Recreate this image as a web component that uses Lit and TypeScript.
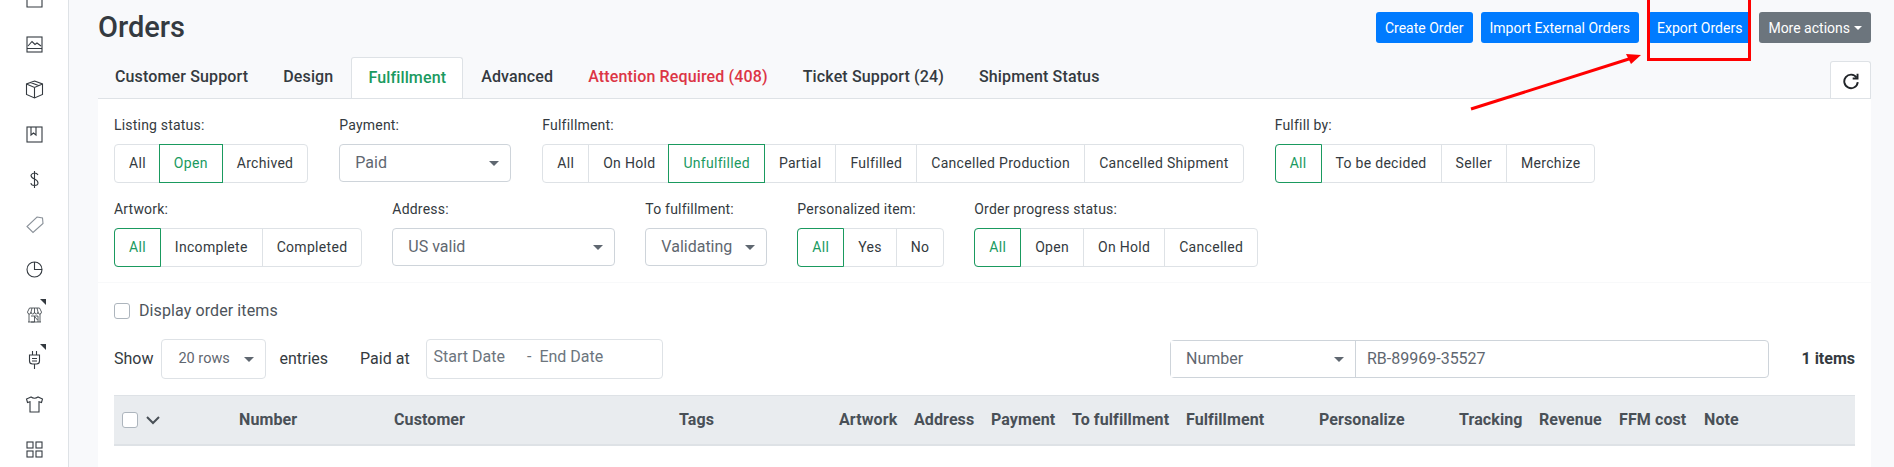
import { LitElement, html, css, svg } from "lit";
import { customElement } from "lit/decorators.js";

type Group = { label: string; items: string[]; active: string };

const icons = [
  svg`<path d="M2 0v17h15V0M5 0v4.5q0 2 2 2h5q2 0 2-2V0"/>`,
  svg`<rect x="2" y="2" width="15" height="15"/><path d="M2 13.5h15M3 11l4-4.5 3 3 2-1.5 4 3"/>`,
  svg`<path d="M9.5 1l8 3v10.5l-8 3.5-8-3.5V4zM1.5 4l8 3.5 8-3.5M9.5 7.5V18M5.5 2.5l8 3"/>`,
  svg`<rect x="2" y="2" width="15" height="15"/><path d="M6 2v8l2.5-2 2.5 2V2"/>`,
  svg`<path d="M13 5q-1-2-3.5-2T6 5.2q0 2.3 3.5 3.8T13 13q0 2.5-3.5 2.5T6 13M9.5 1v17"/>`,
  svg`<path class="soft" d="M12 2l5.5 1 .5 5.5L8 17.5 2 11.5zM14.5 5.5h.01"/>`,
  svg`<circle cx="9.5" cy="9.5" r="7.5"/><path d="M9.5 2v7.5H17"/>`,
  svg`<path class="fine" d="M3 17h13M4 17V9M15 17V9M4.5 3h10l2 4q0 2-1.8 2T13 7q0 2-1.7 2T9.5 7q0 2-1.8 2T6 7q0 2-1.7 2T2.5 7zM7 3L6 7M9.5 3v4M12 3l1 4M6 11h3.5v6H6M9.5 11H13v6M10 12l2.5 3"/>`,
  svg`<path d="M7.5 1v4M11.5 1v4M4.5 5h10v6q0 3-3 3h-4q-3 0-3-3zM7 8.5h5M7 11h5M9.5 14v5"/>`,
  svg`<path d="M6 2L1.5 4l1 3.5L5 6.8V17h9V6.8l2.5.7 1-3.5L13 2q-3.5 2.5-7 0z"/>`,
  svg`<rect x="2" y="2" width="6" height="6"/><rect x="11" y="2" width="6" height="6"/><rect x="2" y="11" width="6" height="6"/><rect x="11" y="11" width="6" height="6"/>`,
];

const tabs = ["Customer Support", "Design", "Fulfillment", "Advanced", "Attention Required (408)", "Ticket Support (24)", "Shipment Status"];
const columns = ["Number", "Customer", "Tags", "Artwork", "Address", "Payment", "To fulfillment", "Fulfillment", "Personalize", "Tracking", "Revenue", "FFM cost", "Note"];

@customElement("app-root")
export class AppRoot extends LitElement {
  static styles = css`
    :host {
      display: flex;
      position: relative;
      height: 467px;
      overflow: hidden;
      background: #f8f9fb;
      color: #343a40;
      font: 400 14px/20px Roboto, "Liberation Sans", sans-serif;
    }
    .side {
      flex: none;
      width: 68px;
      height: 467px;
      background: #fff;
      border-right: 1px solid #dee2e6;
      overflow: hidden;
    }
    .side-list {
      margin-top: -23px;
      display: flex;
      flex-direction: column;
    }
    .side-item {
      position: relative;
      height: 45px;
      display: flex;
      align-items: center;
      justify-content: center;
    }
    .side-item svg {
      width: 19px;
      height: 19px;
      fill: none;
      stroke: #343a40;
      stroke-width: 1.1;
    }
    .side-item svg .soft {
      stroke: #8a9199;
    }
    .side-item svg .fine {
      stroke-width: 0.8;
    }
    .flyout::after {
      content: "";
      position: absolute;
      left: 40px;
      top: 7px;
      border-top: 6px solid #343a40;
      border-left: 6px solid transparent;
    }
    .main {
      flex: 1;
      min-width: 0;
      padding: 12px 23px 0 29px;
    }
    .head {
      display: flex;
      align-items: center;
      height: 31px;
      margin-bottom: 14px;
    }
    h1 {
      margin: 0;
      font-size: 29px;
      line-height: 31px;
      font-weight: 500;
      color: #343a40;
    }
    .actions {
      margin-left: auto;
      display: flex;
      gap: 8px;
    }
    .btn {
      height: 31px;
      padding: 0 9px;
      display: flex;
      align-items: center;
      border-radius: 3px;
      background: #007bff;
      color: #fff;
      font-size: 14px;
    }
    .export {
      margin-left: 1px;
    }
    .btn.more {
      background: #6c757d;
    }
    .btn.more::after {
      content: "";
      margin-left: 4px;
      border-top: 4px solid #fff;
      border-left: 4px solid transparent;
      border-right: 4px solid transparent;
    }
    .tabs {
      display: flex;
      gap: 1px;
      height: 42px;
      margin-bottom: -1px;
      position: relative;
    }
    .tab {
      height: 41px;
      box-sizing: border-box;
      padding: 0 16px 2px;
      border: 1px solid transparent;
      border-bottom: 0;
      border-radius: 3px 3px 0 0;
      display: flex;
      align-items: center;
      font-size: 16px;
      letter-spacing: 0.14px;
      font-weight: 500;
      color: #343a40;
    }
    .tab.active {
      background: #fff;
      border-color: #dee2e6;
      color: #1a9a5f;
      height: 42px;
    }
    .tab.alert {
      color: #dc3545;
    }
    .tab.reload {
      margin-left: auto;
      align-self: flex-end;
      height: 38px;
      width: 41px;
      padding: 0;
      justify-content: center;
      background: #fff;
      border-color: #dee2e6;
    }
    .tab.reload svg {
      width: 18px;
      height: 18px;
      fill: none;
      stroke: #212529;
      stroke-width: 1.7;
    }
    .panel {
      position: relative;
      background: #fff;
      border-top: 1px solid #dee2e6;
      padding: 16px 16px 0;
      height: 368px;
    }
    .filters {
      display: flex;
      flex-direction: column;
      gap: 16px;
      padding-bottom: 15px;
      margin: 0 -16px;
      padding-left: 16px;
      border-bottom: 1px solid #f8f9fa;
    }
    .row {
      display: flex;
      gap: 30px;
    }
    .row.first {
      gap: 31px;
    }
    .field {
      display: flex;
      flex-direction: column;
      gap: 9px;
    }
    .field-label {
      font-size: 14px;
      letter-spacing: 0.2px;
      line-height: 20px;
    }
    .group {
      display: flex;
      height: 39px;
      box-sizing: border-box;
      border: 1px solid #dee2e6;
      border-radius: 4px;
      background: #fff;
    }
    .seg {
      padding: 0 14px 1px;
      display: flex;
      align-items: center;
      font-size: 14px;
      letter-spacing: 0.3px;
      border-left: 1px solid #dee2e6;
      margin: 0;
    }
    .seg:first-child {
      border-left: 0;
    }
    .seg.on {
      color: #1a9a5f;
      margin: -1px 0 -1px -1px;
      border: 1px solid #1a9a5f;
    }
    .seg.on:first-child {
      border-radius: 4px 0 0 4px;
      border-left: 1px solid #1a9a5f;
    }
    .seg.on + .seg {
      border-left: 0;
    }
    .select {
      box-sizing: border-box;
      height: 38px;
      display: flex;
      align-items: center;
      justify-content: space-between;
      padding: 0 11px 0 15px;
      border: 1px solid #ced4da;
      border-radius: 4px;
      background: #fff;
      font-size: 16px;
      color: #5f6770;
    }
    .select::after {
      content: "";
      border-top: 5px solid #5f6770;
      border-left: 5px solid transparent;
      border-right: 5px solid transparent;
    }
    .w-payment { width: 172px; }
    .w-address { width: 223px; }
    .w-validate { width: 122px; }
    .check {
      display: block;
      flex: none;
      box-sizing: border-box;
      width: 16px;
      height: 16px;
      border: 1px solid #adb5bd;
      border-radius: 3px;
      background: #fff;
    }
    .display {
      display: flex;
      align-items: center;
      gap: 9px;
      margin-top: 18px;
      height: 20px;
      font-size: 16px;
      letter-spacing: 0.1px;
      color: #4d545b;
    }
    .tools {
      display: flex;
      align-items: center;
      height: 40px;
      margin-top: 18px;
      font-size: 16px;
    }
    .select.rows {
      width: 105px;
      height: 40px;
      margin: 0 13px 0 8px;
      font-size: 14.5px;
      padding: 0 11px 0 16px;
      border-color: #dee2e6;
    }
    .paid {
      margin: 0 16px 0 32px;
    }
    .dates {
      box-sizing: border-box;
      width: 237px;
      height: 40px;
      padding: 0 7px 4px;
      display: flex;
      align-items: center;
      border: 1px solid #dee2e6;
      border-radius: 4px;
      color: #6c757d;
      font-size: 16px;
    }
    .dates .dash {
      margin: 0 8px 0 22px;
    }
    .search {
      margin-left: auto;
      display: flex;
      width: 599px;
      height: 38px;
      box-sizing: border-box;
      border: 1px solid #ced4da;
      border-radius: 4px;
    }
    .select.by {
      width: 185px;
      height: 36px;
      border: 0;
      border-right: 1px solid #ced4da;
      border-radius: 0;
    }
    .term {
      padding-left: 11px;
      display: flex;
      align-items: center;
      color: #5f6770;
      font-size: 16px;
    }
    .count {
      margin-left: 31px;
      width: 55px;
      font-size: 16px;
      font-weight: 700;
      text-align: right;
      white-space: nowrap;
    }
    .thead {
      display: grid;
      grid-template-columns: 125px 155px 285px 160px 75px 77px 81px 114px 133px 140px 80px 80px 85px 1fr;
      align-items: center;
      height: 51px;
      box-sizing: border-box;
      margin-top: 16px;
      background: #e9ecef;
      border-top: 1px solid #dee2e6;
      border-bottom: 2px solid #dee2e6;
      font-size: 16px;
      letter-spacing: 0.1px;
      font-weight: 700;
      color: #495057;
    }
    .thead-tick {
      display: flex;
      align-items: center;
      gap: 8px;
      padding-left: 8px;
    }
    .thead-tick svg {
      width: 14px;
      height: 10px;
      fill: none;
      stroke: #495057;
      stroke-width: 2;
    }
    .thead span {
      white-space: nowrap;
    }
    .mark {
      position: absolute;
      left: 1647px;
      top: -4px;
      width: 104px;
      height: 65px;
      box-sizing: border-box;
      border: 3px solid #f00;
    }
    .arrow {
      position: absolute;
      left: 0;
      top: 0;
      width: 1894px;
      height: 467px;
      pointer-events: none;
    }
  `;

  private group(g: Group) {
    return html`<div class="field">
      <div class="field-label">${g.label}</div>
      <div class="group">
        ${g.items.map((it) => html`<div class="seg ${it === g.active ? "on" : ""}">${it}</div>`)}
      </div>
    </div>`;
  }

  private select(label: string, value: string, cls: string) {
    return html`<div class="field">
      <div class="field-label">${label}</div>
      <div class="select ${cls}">${value}</div>
    </div>`;
  }

  render() {
    return html`
      <nav class="side">
        <div class="side-list">
          ${icons.map(
            (ic, i) => html`<div class="side-item ${i === 7 || i === 8 ? "flyout" : ""}">
              <svg viewBox="0 0 19 19">${ic}</svg>
            </div>`
          )}
        </div>
      </nav>
      <main class="main">
        <header class="head">
          <h1>Orders</h1>
          <div class="actions">
            <div class="btn">Create Order</div>
            <div class="btn">Import External Orders</div>
            <div class="btn export">Export Orders</div>
            <div class="btn more">More actions</div>
          </div>
        </header>
        <div class="tabs">
          ${tabs.map(
            (t) => html`<div class="tab ${t === "Fulfillment" ? "active" : ""} ${t.startsWith("Attention") ? "alert" : ""}">${t}</div>`
          )}
          <div class="tab reload">
            <svg viewBox="0 0 16 16"><path d="M13 5a6 6 0 1 0 1 4"/><path d="M13.8 1.5v4.3H9.5"/></svg>
          </div>
        </div>
        <section class="panel">
          <div class="filters">
            <div class="row first">
              ${this.group({ label: "Listing status:", items: ["All", "Open", "Archived"], active: "Open" })}
              ${this.select("Payment:", "Paid", "w-payment")}
              ${this.group({
                label: "Fulfillment:",
                items: ["All", "On Hold", "Unfulfilled", "Partial", "Fulfilled", "Cancelled Production", "Cancelled Shipment"],
                active: "Unfulfilled",
              })}
              ${this.group({ label: "Fulfill by:", items: ["All", "To be decided", "Seller", "Merchize"], active: "All" })}
            </div>
            <div class="row">
              ${this.group({ label: "Artwork:", items: ["All", "Incomplete", "Completed"], active: "All" })}
              ${this.select("Address:", "US valid", "w-address")}
              ${this.select("To fulfillment:", "Validating", "w-validate")}
              ${this.group({ label: "Personalized item:", items: ["All", "Yes", "No"], active: "All" })}
              ${this.group({ label: "Order progress status:", items: ["All", "Open", "On Hold", "Cancelled"], active: "All" })}
            </div>
          </div>
          <label class="display"><span class="check"></span>Display order items</label>
          <div class="tools">
            <span>Show</span>
            <div class="select rows">20 rows</div>
            <span>entries</span>
            <span class="paid">Paid at</span>
            <div class="dates"><span>Start Date</span><span class="dash">-</span><span>End Date</span></div>
            <div class="search">
              <div class="select by">Number</div>
              <div class="term">RB-89969-35527</div>
            </div>
            <div class="count">1 items</div>
          </div>
          <div class="thead">
            <div class="thead-tick">
              <span class="check"></span>
              <svg viewBox="0 0 14 10"><path d="M1 2l6 6 6-6"/></svg>
            </div>
            ${columns.map((c) => html`<span>${c}</span>`)}
          </div>
        </section>
      </main>
      <div class="mark"></div>
      <svg class="arrow" viewBox="0 0 1894 467">
        <path d="M1471 109L1632 58" stroke="#f00" stroke-width="3" fill="none"/>
        <path d="M1641 55L1626 54L1631 64z" fill="#f00"/>
      </svg>
    `;
  }
}
